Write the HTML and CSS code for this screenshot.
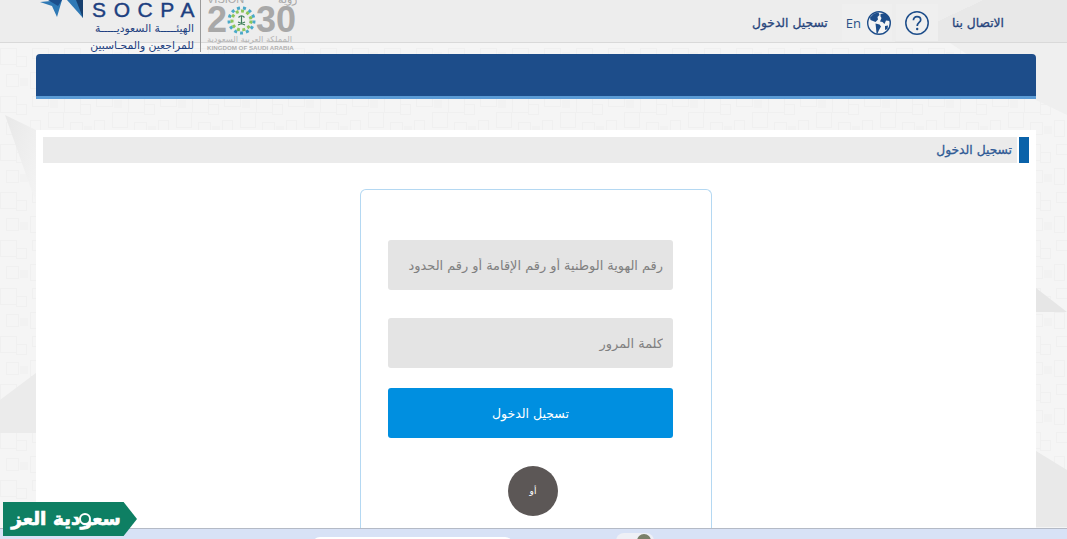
FILE: index.html
```html
<!DOCTYPE html>
<html lang="ar">
<head>
    <meta charset="UTF-8">
    <meta name="viewport" content="width=device-width, initial-scale=1.0">
    <title>تسجيل الدخول</title>
    <link rel="stylesheet" href="styles.css">
</head>
<body>
    <svg class="bg-art" width="1067" height="539" viewBox="0 0 1067 539" aria-hidden="true">
        <defs>
            <pattern id="tiles" width="64" height="48" patternUnits="userSpaceOnUse">
                <g fill="none" stroke="#f0f0f0">
                    <rect x="0.5" y="0.5" width="16" height="16" />
                    <rect x="16.5" y="8.5" width="10" height="10" />
                    <rect x="32.5" y="0.5" width="16" height="10" />
                    <rect x="48.5" y="16.5" width="15" height="15" />
                    <rect x="6.5" y="26.5" width="12" height="12" />
                    <rect x="30.5" y="24.5" width="10" height="16" />
                </g>
                <rect x="20" y="30" width="8" height="8" fill="#f2f2f2" />
                <rect x="50" y="4" width="8" height="8" fill="#f2f2f2" />
            </pattern>
            <linearGradient id="fade-left" x1="0" y1="0" x2="1" y2="1">
                <stop offset="0" stop-color="#e8e8e8" />
                <stop offset="1" stop-color="#f4f4f4" />
            </linearGradient>
        </defs>
        <rect width="1067" height="539" fill="url(#tiles)" />
        <polygon points="5,115 36,203 36,130" fill="url(#fade-left)" />
        <polygon points="0,400 36,373 36,433 0,433" fill="#ebebeb" />
        <polygon points="1036,288 1067,312 1036,312" fill="#e6e6e6" />
        <polygon points="1036,451 1067,470 1067,527 1036,527" fill="#e9e9e9" />
        <polygon points="950,43 1067,43 1067,115 1036,100" fill="#efefef" />
    </svg>

    <header class="topbar">
        <div class="logos">
            <svg class="socpa-mark" width="44" height="20" viewBox="0 0 44 20" aria-hidden="true">
                <path d="M0 2 L22 0 L17 17 L12 6 Z" fill="#2f79b5" />
                <path d="M8 0 H22 L18 6 Z" fill="#1c4f8c" />
                <path d="M27 0 H43 V18 Z" fill="#2f79b5" />
                <path d="M36 0 H43 V18 Z" fill="#17406f" />
            </svg>
            <div class="socpa-text">
                <div class="socpa-name">SOCPA</div>
                <div class="socpa-ar">الهيئـــــة السعوديـــــة</div>
                <div class="socpa-ar">للمراجعين والمحـاسبين</div>
            </div>
            <div class="vision">
                <div class="vision-top"><span>VISION</span><span>رؤية</span></div>
                <div class="vision-year">
                    <span>2</span>
                    <svg class="emblem" width="29" height="31" viewBox="0 0 29 31" aria-hidden="true">
                        <circle cx="14.5" cy="15.5" r="12.5" fill="none" stroke="#4aa9c9" stroke-width="3" stroke-dasharray="3 3" />
                        <circle cx="14.5" cy="15.5" r="9.5" fill="none" stroke="#8cc65a" stroke-width="3" stroke-dasharray="3 2.5" />
                        <circle cx="14.5" cy="15.5" r="6.5" fill="#f1f1f1" />
                        <path d="M14.5 10.5 V19 M11 20 L18 17 M18 20 L11 17 M11.5 12.5 Q14.5 9 17.5 12.5" fill="none" stroke="#3d7f5a" stroke-width="1.2" />
                    </svg>
                    <span>30</span>
                </div>
                <div class="vision-ar">المملكة العربية السعودية</div>
                <div class="vision-en">KINGDOM OF SAUDI ARABIA</div>
            </div>
        </div>
        <nav class="topnav">
            <a class="nav-link" href="#">الاتصال بنا</a>
            <a class="nav-icon help" href="#">
                <svg width="24" height="24" viewBox="0 0 24 24" aria-hidden="true">
                    <circle cx="12" cy="12" r="11.2" fill="none" stroke="#1d4d8a" stroke-width="1.5" />
                    <path d="M8.4 9.2 C8.4 7 10 5.6 12 5.6 C14.2 5.6 15.7 7 15.7 8.9 C15.7 11.4 12.2 11.6 12.2 15" fill="none" stroke="#1d4d8a" stroke-width="1.7" />
                    <circle cx="12.2" cy="18" r="1.2" fill="#1d4d8a" />
                </svg>
            </a>
            <a class="nav-icon lang" href="#">
                <svg width="24" height="24" viewBox="0 0 24 24" aria-hidden="true">
                    <circle cx="12" cy="12" r="11.3" fill="#f4f4f4" stroke="#1d4d8a" stroke-width="1.4" />
                    <path d="M3 6.5 L7 2.5 L11.5 1.5 L12.5 4 L10.5 6 L11 8.5 L8.5 11 L6 10 L3.5 9 Z" fill="#1d4d8a" />
                    <path d="M8.5 12.5 L12.5 13.5 L14 15.5 L12 19 L10.5 22.5 L9.5 22 L9 17 Z" fill="#1d4d8a" />
                    <path d="M13.5 3 L18 2 L22 6 L23 10 L19 9.5 L17.5 13 L15.5 11 L13 10.5 L14.5 7 L13.5 5.5 Z" fill="#1d4d8a" />
                    <path d="M18 15 L21 14.5 L20.5 18 L18 19 Z" fill="#1d4d8a" />
                </svg>
                <span>En</span>
            </a>
            <a class="nav-link" href="#">تسجيل الدخول</a>
        </nav>
    </header>

    <div class="banner"></div>

    <main class="content">
        <div class="title-row">
            <div class="title-mark"></div>
            <h1 class="title-text">تسجيل الدخول</h1>
        </div>
        <div class="login-card">
            <input class="field" type="text" placeholder="رقم الهوية الوطنية أو رقم الإقامة أو رقم الحدود">
            <input class="field" type="password" placeholder="كلمة المرور">
            <button class="login-btn" type="button">تسجيل الدخول</button>
            <div class="or-circle">أو</div>
        </div>
    </main>

    <div class="bottom-strip">
        <div class="strip-tab wide"></div>
        <div class="strip-tab small"><span class="avatar"></span></div>
    </div>

    <div class="promo">
        <span class="promo-text">سعودية العز</span>
        <span class="promo-seal"></span>
    </div>
</body>
</html>
```

FILE: styles.css
```css
* {
    margin: 0;
    padding: 0;
    box-sizing: border-box;
}

html, body {
    height: 539px;
    overflow: hidden;
}

body {
    position: relative;
    font-family: "DejaVu Sans", "Noto Sans", sans-serif;
    background-color: #f5f5f5;
}

.bg-art {
    position: absolute;
    top: 0;
    left: 0;
}

.topbar {
    position: relative;
    height: 43px;
    background: linear-gradient(155deg, #ededed 85%, #e8e8e8 85%);
    border-bottom: 1px solid #d9d9d9;
    display: flex;
    justify-content: space-between;
    padding-left: 40px;
}

.logos {
    display: flex;
    align-items: flex-start;
    height: 52px;
}

.socpa-text {
    width: 116px;
    text-align: right;
    color: #1d3f80;
    padding-right: 6px;
}

.socpa-name {
    direction: ltr;
    font-family: "Liberation Sans", sans-serif;
    font-size: 21px;
    line-height: 20px;
    letter-spacing: 7.6px;
    margin-right: -8px;
    -webkit-text-stroke: 0.4px #1d3f80;
}

.socpa-ar {
    direction: rtl;
    font-size: 10.8px;
    line-height: 17px;
    white-space: nowrap;
}

.vision {
    width: 97px;
    height: 52px;
    border-left: 1px solid #9a9a9a;
    padding-left: 6px;
    color: #a8a8a8;
    overflow: hidden;
}

.vision-top {
    display: flex;
    justify-content: space-between;
    height: 3px;
    margin-top: -1px;
    margin-bottom: 3px;
    font-family: "Liberation Sans", sans-serif;
    font-size: 11px;
    line-height: 0;
    white-space: nowrap;
}

.vision-year {
    display: flex;
    align-items: center;
    height: 30px;
    font-family: "Liberation Sans", sans-serif;
    font-weight: bold;
    font-size: 36px;
    line-height: 30px;
}

.emblem {
    flex-shrink: 0;
}

.vision-ar {
    direction: rtl;
    font-size: 8.3px;
    line-height: 9px;
    white-space: nowrap;
    text-align: left;
    color: #b4b4b4;
}

.vision-en {
    font-family: "Liberation Sans", sans-serif;
    font-size: 6.2px;
    font-weight: bold;
    line-height: 7px;
    white-space: nowrap;
    color: #b0b0b0;
}

.topnav {
    direction: rtl;
    display: flex;
    align-items: center;
    gap: 14px;
    height: 43px;
    padding: 2px 63px 0 0;
}

.nav-link {
    color: #27457c;
    font-size: 12.3px;
    -webkit-text-stroke: 0.3px #27457c;
    text-decoration: none;
    white-space: nowrap;
}

.nav-icon {
    display: flex;
    align-items: center;
    height: 37px;
    text-decoration: none;
    background: #efefef;
}

.help {
    padding: 0 9px;
    margin-left: -10px;
}

.lang {
    gap: 6px;
    padding: 0 1px 0 4px;
}

.lang span {
    direction: ltr;
    color: #2a5288;
    font-size: 13px;
    font-family: "Open Sans", sans-serif;
}

.banner {
    position: relative;
    margin: 11px 31px 0 36px;
    height: 45px;
    background: #1d4d8a;
    border-bottom: 3px solid #5b9bd5;
    border-radius: 4px 4px 0 0;
}

.content {
    position: relative;
    margin: 31px 31px 0 36px;
    height: 398px;
    background: #fff;
    padding-top: 7px;
}

.title-row {
    direction: rtl;
    display: flex;
    gap: 2px;
    height: 26px;
    margin: 0 7px;
}

.title-mark {
    width: 10px;
    background: #0a62a9;
}

.title-text {
    flex: 1;
    background: #ebebeb;
    color: #2f5a95;
    font-size: 12.3px;
    font-weight: normal;
    -webkit-text-stroke: 0.3px #2f5a95;
    line-height: 26px;
    padding-right: 5px;
}

.login-card {
    direction: rtl;
    width: 352px;
    height: 365px;
    margin: 26px 0 0 324px;
    border: 1px solid #b4d8f2;
    border-bottom: 0;
    border-radius: 6px 6px 0 0;
    padding: 50px 38px 0 27px;
    display: flex;
    flex-direction: column;
    align-items: stretch;
}

.field {
    flex-shrink: 0;
    height: 50px;
    border: 0;
    border-radius: 3px;
    background: #e4e4e4;
    padding: 0 10px;
    font-family: inherit;
    font-size: 12.9px;
    margin-bottom: 28px;
    direction: rtl;
    outline: none;
}

.field::placeholder {
    color: #808080;
    opacity: 1;
}

.field + .field {
    margin-bottom: 20px;
}

.login-btn {
    flex-shrink: 0;
    height: 50px;
    border: 0;
    border-radius: 3px;
    background: #008fe0;
    color: #fff;
    font-family: inherit;
    font-size: 12.5px;
}

.or-circle {
    flex-shrink: 0;
    align-self: flex-start;
    width: 50px;
    height: 50px;
    margin: 28px 115px 0 0;
    border-radius: 50%;
    background: #5c5756;
    color: #fff;
    font-size: 9px;
    line-height: 50px;
    text-align: center;
}

.bottom-strip {
    position: absolute;
    left: 0;
    right: 0;
    top: 528px;
    height: 11px;
    background: #d8e2f6;
    border-top: 1px solid #b4bac6;
    overflow: hidden;
}

.strip-tab {
    position: absolute;
    background: #fff;
    border-radius: 8px 8px 0 0;
}

.wide {
    left: 312px;
    top: 8px;
    width: 201px;
    height: 10px;
}

.small {
    left: 616px;
    top: 4px;
    width: 38px;
    height: 12px;
    background: #eef0f6;
}

.avatar {
    position: absolute;
    left: 21px;
    top: 1px;
    width: 14px;
    height: 14px;
    border-radius: 50%;
    background: #7a806a;
}

.promo {
    position: absolute;
    left: 3px;
    top: 502px;
    width: 134px;
    height: 34px;
    padding-right: 8px;
    background: #0e7f63;
    clip-path: polygon(0 0, 90% 0, 100% 50%, 90% 100%, 0 100%);
    color: #fff;
    direction: rtl;
    line-height: 34px;
    text-align: center;
    white-space: nowrap;
}

.promo-text {
    font-size: 18.5px;
    font-weight: bold;
    -webkit-text-stroke: 0.7px #fff;
}

.promo-seal {
    position: absolute;
    left: 76px;
    top: 11px;
    width: 12px;
    height: 12px;
    border-radius: 50%;
    background: #0e7f63;
    border: 2px solid #fff;
}
```
